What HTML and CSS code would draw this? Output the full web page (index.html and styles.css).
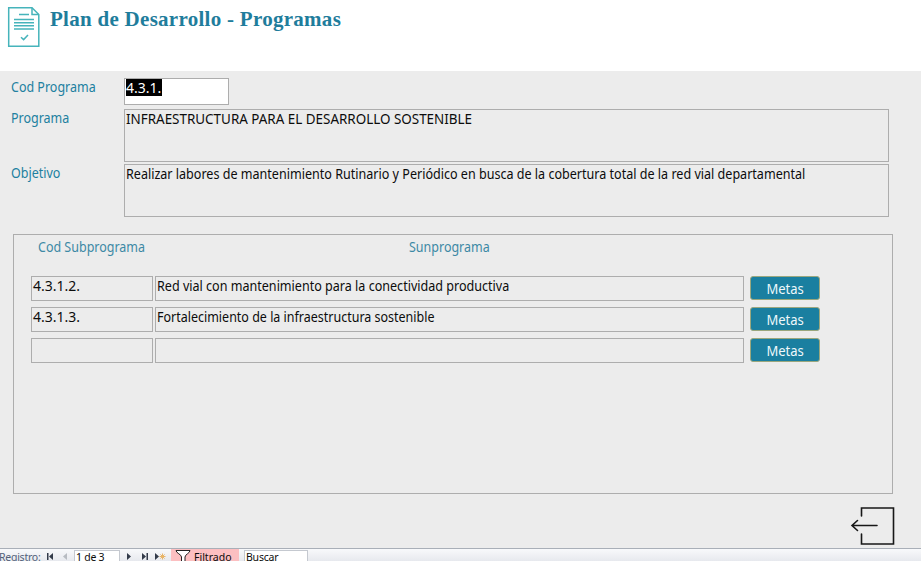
FILE: index.html
```html
<!DOCTYPE html>
<html lang="es">
<head>
<meta charset="utf-8">
<title>Plan de Desarrollo - Programas</title>
<link rel="stylesheet" href="styles.css">
</head>
<body>
<header class="header">
  <svg class="doc-icon" width="34" height="42" viewBox="0 0 34 42" fill="none" stroke="#46b4bb" stroke-width="1.5">
    <path d="M1.700 1.700H25L31.800 8.500V40.300H1.700Z"/>
    <path d="M25 1.700V8.500H31.800M12 8.400H22M7 13.500H27M7 16.700H27M7 19.800H27M7 23H27M14 31.200L16.600 33.600L21 29"/>
  </svg>
  <h1 class="title">Plan de Desarrollo - Programas</h1>
</header>
<main class="form">
  <div class="fields">
    <label class="label"><span class="narrow">Cod Programa</span></label>
    <div class="box box-code"><span class="selected">4.3.1.</span></div>
    <label class="label"><span class="narrow">Programa</span></label>
    <div class="box box-area"><span class="narrow caps">INFRAESTRUCTURA PARA EL DESARROLLO SOSTENIBLE</span></div>
    <label class="label"><span class="narrow">Objetivo</span></label>
    <div class="box box-area"><span class="narrow goal">Realizar labores de mantenimiento Rutinario y Periódico en busca de la cobertura total de la red vial departamental</span></div>
  </div>
  <section class="panel">
    <div class="panel-head">
      <div class="head-code"><span class="narrow">Cod Subprograma</span></div>
      <div><span class="narrow">Sunprograma</span></div>
    </div>
    <div class="row">
      <div class="box">4.3.1.2.</div>
      <div class="box"><span class="narrow name">Red vial con mantenimiento para la conectividad productiva</span></div>
      <button class="metas"><span>Metas</span></button>
    </div>
    <div class="row">
      <div class="box">4.3.1.3.</div>
      <div class="box"><span class="narrow">Fortalecimiento de la infraestructura sostenible</span></div>
      <button class="metas"><span>Metas</span></button>
    </div>
    <div class="row">
      <div class="box"></div>
      <div class="box"></div>
      <button class="metas"><span>Metas</span></button>
    </div>
  </section>
  <div class="exit">
    <svg width="46" height="40" viewBox="0 0 46 40" fill="none" stroke="#171717" stroke-width="1.6" stroke-linecap="round">
      <path d="M11.500 10V2H43.500V38H11.500V28"/>
      <path d="M27 19.500H2M7.500 14.500L2 19.500L7.500 24.500"/>
    </svg>
  </div>
</main>
<footer class="nav">
  <span class="nav-label">Registro:</span>
  <svg class="nav-first" width="24" height="12" viewBox="0 0 24 12"><path d="M1 2H2.500V9H1ZM7 2V9L3 5.500Z" fill="#333b4a"/><path d="M21 2V9L17 5.500Z" fill="#b8bcc2"/></svg>
  <span class="nav-pos">1 de 3</span>
  <svg class="nav-next" width="42" height="12" viewBox="0 0 42 12"><path d="M2 2V9L6 5.500ZM17 2V9L21 5.500ZM21.500 2H23V9H21.500ZM30 2V9L34 5.500Z" fill="#333b4a"/><path d="M37.500 2.500V8.500M34.500 5.500H40.500M35.400 3.400L39.600 7.600M39.600 3.400L35.400 7.600" stroke="#e9b568" stroke-width="1"/></svg>
  <span class="filter">
    <svg width="16" height="14" viewBox="0 0 16 14"><path d="M1 1.500H15C15 4 10 5.500 10 8V13H6.500V8C6.500 5.500 1 4 1 1.500Z" fill="#fff" stroke="#222"/></svg>
    <span>Filtrado</span>
  </span>
  <span class="search">Buscar</span>
</footer>
</body>
</html>
```
FILE: styles.css
```css
* { box-sizing: border-box; }

body {
  margin: 0;
  width: 921px;
  height: 561px;
  overflow: hidden;
  display: flex;
  flex-direction: column;
  background: #fff;
  color: #0c0c0c;
  font: 14px/17px "Noto Sans", sans-serif;
  white-space: nowrap;
}

.header {
  flex: none;
  height: 71px;
  display: flex;
  padding: 6px 0 0 7px;
}

.doc-icon { flex: none; }

.title {
  margin: 0 0 0 9px;
  color: #1f7d9c;
  font: bold 21px/26px "Liberation Serif", serif;
  letter-spacing: 0.28px;
}

.form {
  flex: none;
  height: 477px;
  background: #ececec;
}

.fields {
  display: grid;
  grid-template-columns: 113px 765px;
  grid-template-rows: 31px 55px 53px;
  align-items: start;
  padding: 7px 0 0 11px;
}

.label { color: #2180a0; }

/* Condensed text, as in the form's native typeface */
.narrow {
  display: inline-block;
  transform: scaleX(0.892);
  transform-origin: 0 0;
}

.caps { transform: scaleX(0.959); }
.goal, .name { transform: scaleX(0.897); }

.box {
  border: 1px solid #adadad;
  padding: 0 0 0 1px;
  min-width: 0;
}

.box-code { width: 105px; height: 27px; background: #fff; }
.box-area { height: 53px; }

.selected {
  display: inline-block;
  height: 17px;
  padding-right: 1px;
  background: #000;
  color: #fff;
}

.panel {
  width: 880px;
  height: 260px;
  margin: 17px 0 0 13px;
  border: 1px solid #adadad;
  padding-left: 17px;
}

.panel-head {
  display: flex;
  height: 41px;
  padding: 3px 0 0 7px;
  color: #3d89a5;
}

.head-code { width: 371px; }

.row {
  display: grid;
  grid-template-columns: 122px 589px 70px;
  column-gap: 2px;
  height: 25px;
  margin-bottom: 6px;
}

.metas {
  height: 24px;
  margin: 0 0 0 4px;
  width: 70px;
  padding: 0;
  border: 1px solid #9aa77e;
  border-radius: 3px;
  background: #1a7fa0;
  color: #eef8fb;
  font: 14px/23px "Noto Sans", sans-serif;
}

.metas span { display: inline-block; transform: scaleX(0.93); }

.exit { padding: 12px 0 0 850px; }
.exit svg { display: block; }

.nav {
  flex: none;
  height: 13px;
  display: flex;
  border-top: 1px solid #a9afb8;
  background: linear-gradient(#f8f9fb, #e7e9ee);
  font-size: 10.5px;
  line-height: 16px;
}

.nav-label { width: 45px; color: #51617a; margin-left: -1px; letter-spacing: -0.25px; }
.nav-first { width: 24px; margin: 2px 4px 0 2px; }
.nav-pos { width: 46px; margin-top: 1px; padding-left: 1px; background: #fff; border: 1px solid #c5c9d0; line-height: 13px; height: 20px; letter-spacing: -0.25px; }
.nav-next { margin: 2px 0 0 5px; }
.filter { display: flex; width: 68px; height: 20px; margin-left: 4px; padding-left: 4px; background: #fcbfc1; gap: 3px; }
.search { width: 64px; height: 20px; margin: 1px 0 0 5px; padding-left: 1px; background: #fff; border: 1px solid #c5c9d0; line-height: 13px; letter-spacing: -0.2px; }
```
